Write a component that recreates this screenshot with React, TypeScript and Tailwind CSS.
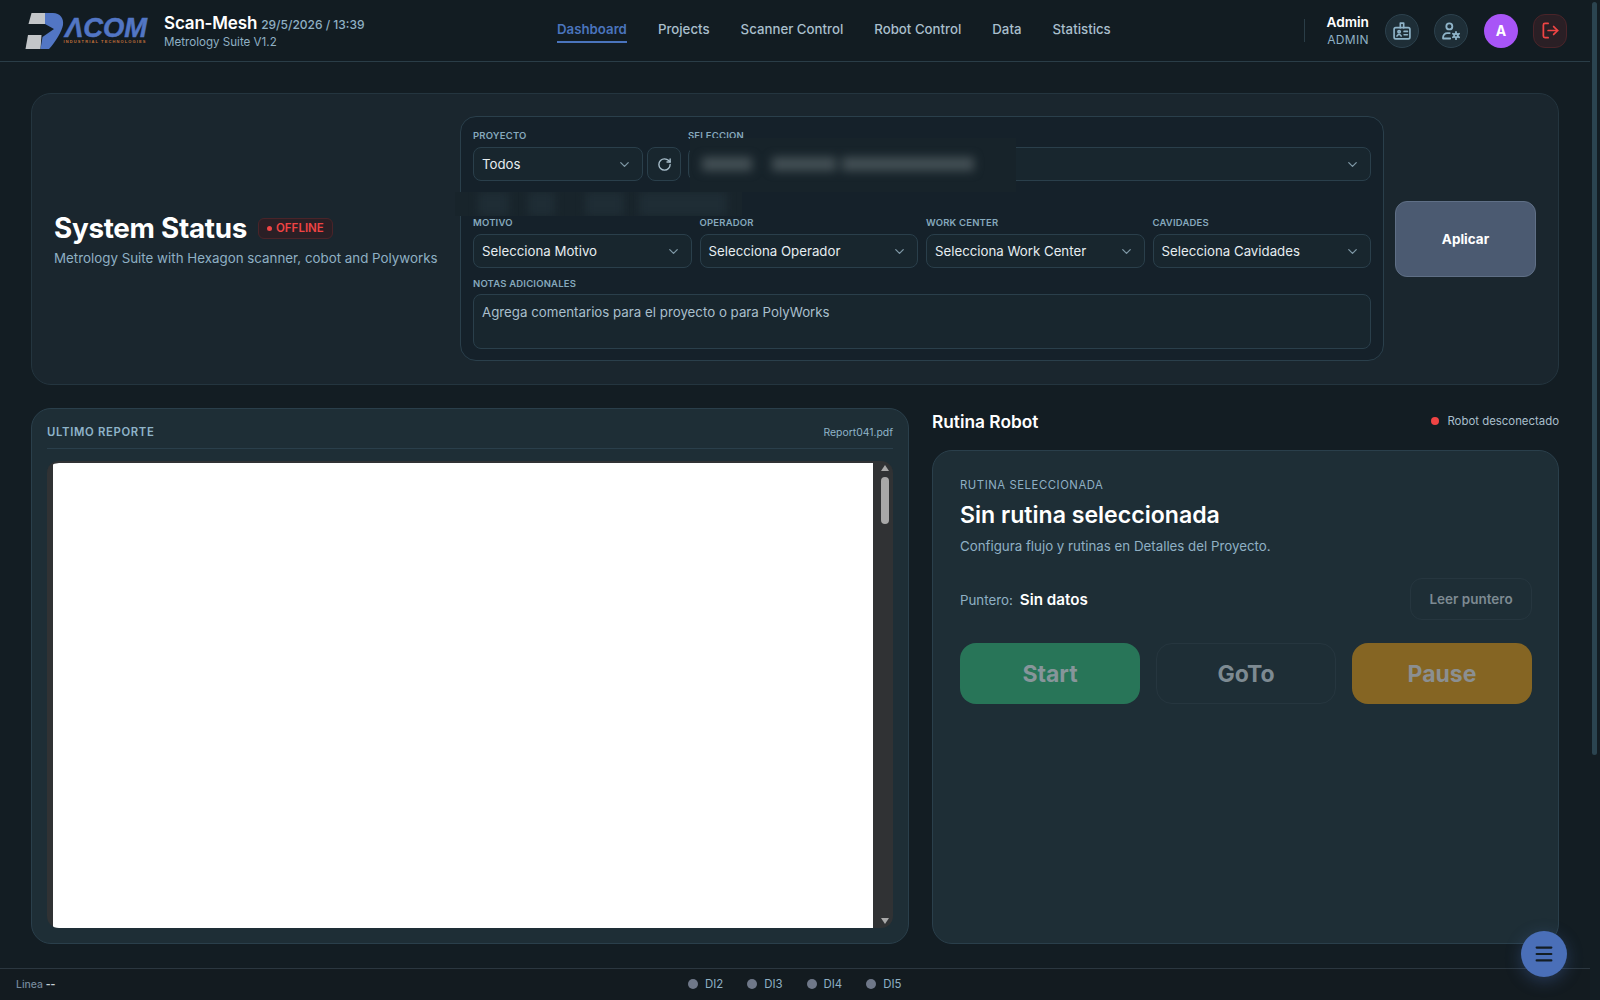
import React from 'react';
import { ChevronDown, LogOut, Menu, RotateCw } from 'lucide-react';

const navItems = ['Dashboard', 'Projects', 'Scanner Control', 'Robot Control', 'Data', 'Statistics'];
const inputs = ['DI2', 'DI3', 'DI4', 'DI5'];
const fields = [
  { label: 'Motivo', value: 'Selecciona Motivo' },
  { label: 'Operador', value: 'Selecciona Operador' },
  { label: 'Work Center', value: 'Selecciona Work Center' },
  { label: 'Cavidades', value: 'Selecciona Cavidades' },
];

const labelStyle = 'block h-[13px] text-[9.5px] leading-[14px] font-semibold uppercase tracking-[0.02em] text-[#86a9bd]';
const selectStyle =
  'flex items-center justify-between h-[34px] mt-[5px] pt-[1px] pl-2 pr-[10px] rounded-lg border border-[#2a3f4b] bg-[#18262e] text-[13.25px] text-[#e6edf1]';

const Logo = () => (
  <svg width="126" height="38" viewBox="0 0 126 38" className="shrink-0">
    <path d="M6.5 1H21L20 12H3.5Z" fill="#c3c6c9" />
    <path d="M3 23H16.5L15.5 37H0.5Z" fill="#c3c6c9" />
    <path d="M20 1H28C35 1 39 6 38 13C37 19 30 31 24 37H15.5L17.5 25L29 17L20 12Z" fill="#5276c4" />
    <text
      x="40"
      y="24.5"
      fill="#5276c4"
      stroke="#5276c4"
      strokeWidth="0.5"
      fontFamily="Liberation Sans, sans-serif"
      fontStyle="italic"
      fontWeight="700"
      fontSize="27"
      textLength="82"
      lengthAdjust="spacingAndGlyphs"
    >
      ΛCOM
    </text>
    <text
      x="38.5"
      y="31"
      fill="#c0703a"
      fontFamily="Liberation Sans, sans-serif"
      fontWeight="700"
      fontSize="4"
      textLength="82"
      lengthAdjust="spacing"
    >
      INDUSTRIAL TECHNOLOGIES
    </text>
  </svg>
);

const BadgeIcon = () => (
  <svg width="20" height="20" viewBox="0 0 24 24" fill="none" stroke="#8fb4c9" strokeWidth="2" strokeLinecap="round" strokeLinejoin="round">
    <rect x="2.5" y="8" width="19" height="13.5" rx="2" />
    <path d="M10 8V2.5h4V8" />
    <circle cx="8.5" cy="13" r="1.4" />
    <path d="M6 18c.6-1.3 1.4-1.8 2.5-1.8s1.9.5 2.5 1.8" />
    <path d="M14.5 12.5h4M14.5 16.5h4" />
  </svg>
);

const UserGearIcon = () => (
  <svg width="20" height="20" viewBox="0 0 24 24" fill="none" stroke="#8fb4c9" strokeWidth="2.2" strokeLinecap="round" strokeLinejoin="round">
    <circle cx="10" cy="6.5" r="3.6" />
    <path d="M2.5 21v-1.5a5 5 0 0 1 5-5h3M2.5 21h8.5" />
    <circle cx="18" cy="17.5" r="2.2" />
    <path d="M18 13.2v1.1M18 20.7v1.1M14.3 15.4l1 .6M20.7 19l1 .6M14.3 19.6l1-.6M20.7 16l1-.6" />
  </svg>
);

const Header = () => (
  <header className="flex items-center h-[62px] shrink-0 pl-[25px] pr-[23px] border-b border-[#2a3d47] bg-[#121c22]">
    <div className="flex items-center w-[532px]">
      <Logo />
      <div className="ml-[13px]">
        <div className="flex items-baseline gap-1 mt-[1px] leading-5">
          <span className="text-[17px] font-semibold tracking-[-0.01em] text-white">Scan-Mesh</span>
          <span className="text-xs font-medium text-[#8fb0c4]">29/5/2026 / 13:39</span>
        </div>
        <div className="mt-[1px] text-[11.6px] leading-4 text-[#8fb0c4]">Metrology Suite V1.2</div>
      </div>
    </div>
    <nav className="flex items-center gap-[31px] text-[13.25px] font-medium text-[#a9bfcc]">
      {navItems.map((item, i) => (
        <a
          key={item}
          className={
            i === 0
              ? 'pb-[2px] border-b-2 border-[#4a74bd] font-semibold text-[#4a74bd] leading-5'
              : 'pb-[2px] border-b-2 border-transparent leading-5'
          }
        >
          {item}
        </a>
      ))}
    </nav>
    <div className="flex items-center ml-auto">
      <div className="w-px h-[23px] mr-[21px] bg-[#2a3d47]" />
      <div className="text-right mr-4">
        <div className="text-[13.7px] leading-[18px] font-semibold text-white">Admin</div>
        <div className="text-xs leading-[17px] tracking-[0.03em] text-[#8fb0c4]">ADMIN</div>
      </div>
      <div className="flex items-center justify-center w-[34px] h-[34px] rounded-full border border-[#2c414d] bg-[#1e2e37]">
        <BadgeIcon />
      </div>
      <div className="flex items-center justify-center w-[34px] h-[34px] ml-[15px] rounded-full border border-[#2c414d] bg-[#1e2e37]">
        <UserGearIcon />
      </div>
      <div className="flex items-center justify-center w-[34px] h-[34px] ml-4 rounded-full bg-[#a855f7] text-sm font-bold text-white">
        A
      </div>
      <div className="flex items-center justify-center w-[34px] h-[34px] ml-[15px] rounded-xl border border-[#4a2429] bg-[#2a1f25]">
        <LogOut size={19} strokeWidth={2.2} className="text-[#ef4444]" />
      </div>
    </div>
  </header>
);

const ProjectPanel = () => (
  <div className="relative w-[924px] h-[245px] -mt-[1px] p-3 rounded-2xl border border-[#2a3f4b] bg-[#15212a]">
    <div className="flex gap-[7px] h-[52px]">
      <div className="w-[170px]">
        <label className={labelStyle}>Proyecto</label>
        <div className={selectStyle}>
          Todos
          <ChevronDown size={15} className="text-[#7f98a6]" />
        </div>
      </div>
      <div className="flex items-center justify-center w-[34px] h-[34px] mt-[18px] -ml-[3px] rounded-lg border border-[#2a3f4b] bg-[#18262e]">
        <RotateCw size={15} strokeWidth={2.2} className="text-[#a9bfcc]" />
      </div>
      <div className="flex-1">
        <label className={labelStyle}>Seleccion</label>
        <div className={selectStyle + ' justify-end'}>
          <ChevronDown size={15} className="text-[#7f98a6]" />
        </div>
      </div>
    </div>
    <div className="grid grid-cols-4 gap-2 mt-[35px]">
      {fields.map((field) => (
        <div key={field.label}>
          <label className={labelStyle}>{field.label}</label>
          <div className={selectStyle}>
            {field.value}
            <ChevronDown size={15} className="text-[#7f98a6]" />
          </div>
        </div>
      ))}
    </div>
    <label className={labelStyle + ' mt-[9px]'}>Notas adicionales</label>
    <textarea
      readOnly
      placeholder="Agrega comentarios para el proyecto o para PolyWorks"
      className="block w-full h-[55px] mt-[4px] px-2 py-[8px] rounded-lg border border-[#2a3f4b] bg-[#18262e] text-[13.3px] text-[#a9bfcc] placeholder:text-[#a9bfcc] outline-none resize-none"
    />
    {/* difuminado de la seleccion */}
    <div className="absolute left-[229px] top-[21px] flex items-center w-[326px] h-[54px] pl-[12px] bg-[#17232a]">
      <div className="flex gap-[20px] -mt-[2px] blur-[5px]">
        <div className="w-[50px] h-[14px] bg-[#434f54]" />
        <div className="flex gap-[6px]">
          <div className="w-[64px] h-[14px] bg-[#434f54]" />
          <div className="w-[132px] h-[14px] bg-[#434f54]" />
        </div>
      </div>
    </div>
    <div className="absolute -left-[6px] top-[75px] flex w-[287px] h-[24px] overflow-hidden bg-[#18242b]">
      <div className="ml-[23px] w-[31px] h-full bg-[#1f2d35] blur-[4px]" />
      <div className="ml-[19px] w-[27px] h-full bg-[#1f2d35] blur-[4px]" />
      <div className="ml-[30px] w-[39px] h-full bg-[#1f2d35] blur-[4px]" />
      <div className="ml-[15px] w-[88px] h-full bg-[#1f2d35] blur-[4px]" />
    </div>
  </div>
);

const StatusCard = () => (
  <section className="flex items-center h-[292px] pl-[22px] pr-[22px] rounded-[20px] border border-[#24353f] bg-[#1a262e]">
    <div className="w-[406px]">
      <div className="flex items-center gap-[11px]">
        <h1 className="mt-[1px] text-[27.8px] leading-9 font-bold tracking-[-0.01em] text-white">System Status</h1>
        <span className="flex items-center gap-1 h-[21px] px-2 mt-[1px] rounded-md border border-[#4a2429] bg-[#2a1f25] text-[11.5px] font-semibold text-[#ef4444]">
          <span className="w-[5px] h-[5px] rounded-full bg-[#ef4444]" />
          OFFLINE
        </span>
      </div>
      <p className="mt-[2px] text-[13.35px] text-[#8fb0c4]">Metrology Suite with Hexagon scanner, cobot and Polyworks</p>
    </div>
    <ProjectPanel />
    <button className="w-[141px] h-[76px] ml-auto -mt-[1px] pt-[1px] rounded-xl border border-[#5f6f86] bg-[#4b5a71] text-[13.5px] font-bold text-white">
      Aplicar
    </button>
  </section>
);

const ReportCard = () => (
  <section className="flex flex-col w-[878px] px-[15px] pt-[13px] pb-[15px] rounded-[20px] border border-[#2a3f4b] bg-[#1e2e36]">
    <div className="flex items-center justify-between h-[21px] pb-[5px] box-content text-[#8fb4c9] border-b border-[#2a3f4b]">
      <h2 className="text-[11.3px] font-semibold tracking-[0.06em]">ULTIMO REPORTE</h2>
      <span className="text-[10.4px]">Report041.pdf</span>
    </div>
    <div className="flex flex-1 mt-[12px] overflow-hidden rounded-xl border-t-2 border-[#303234] bg-[#303234]">
      <div className="flex-1 ml-[6px] bg-white" />
      <div className="flex flex-col items-center w-[20px] pl-[4px] pt-[2px] pb-[4px]">
        <div className="w-0 h-0 border-x-[4px] border-x-transparent border-b-[6px] border-b-[#a8a8a8]" />
        <div className="w-[8px] h-[47px] mt-[6px] rounded-full bg-[#a8a8a8]" />
        <div className="w-0 h-0 mt-auto border-x-[4px] border-x-transparent border-t-[6px] border-t-[#a8a8a8]" />
      </div>
    </div>
  </section>
);

const RobotColumn = () => (
  <section className="flex flex-col flex-1 min-w-0">
    <div className="flex items-center justify-between h-[26px] pt-[1px]">
      <h2 className="text-[17.3px] font-semibold text-white">Rutina Robot</h2>
      <div className="flex items-center gap-2 text-[11.4px] text-[#a9bfcc]">
        <span className="w-[8px] h-[8px] rounded-full bg-[#ef4444]" />
        Robot desconectado
      </div>
    </div>
    <div className="flex-1 mt-[16px] pl-[27px] pr-[26px] pt-[26px] rounded-[20px] border border-[#2a3f4b] bg-[#1e2e36]">
      <div className="text-[11.3px] leading-4 tracking-[0.05em] text-[#8fb0c4]">RUTINA SELECCIONADA</div>
      <h3 className="mt-[6px] text-[23.1px] leading-8 font-semibold text-white">Sin rutina seleccionada</h3>
      <p className="mt-[5px] text-[13.3px] leading-5 text-[#8fb0c4]">Configura flujo y rutinas en Detalles del Proyecto.</p>
      <div className="flex items-center justify-between mt-[22px]">
        <div className="flex items-baseline gap-[7px] pt-[2px]">
          <span className="text-[13.3px] text-[#8fb0c4]">Puntero:</span>
          <span className="text-[15.2px] font-semibold text-white">Sin datos</span>
        </div>
        <button className="w-[122px] h-[42px] rounded-xl border border-[#26363f] text-[13.5px] font-semibold text-[#7d8a92]">
          Leer puntero
        </button>
      </div>
      <div className="grid grid-cols-3 gap-4 mt-[23px]">
        <button className="h-[61px] pt-[1px] rounded-2xl bg-[#287558] text-[23px] font-bold text-[#87959a]">Start</button>
        <button className="h-[61px] pt-[1px] rounded-2xl border border-[#26363f] text-[23px] font-bold text-[#7d8a92]">GoTo</button>
        <button className="h-[61px] pt-[1px] rounded-2xl bg-[#856523] text-[23px] font-bold text-[#8b8f91]">Pause</button>
      </div>
    </div>
  </section>
);

const Footer = () => (
  <footer className="flex items-center h-[32px] shrink-0 px-4 border-t border-[#2b3740] bg-[#131b20]">
    <div className="w-[672px] text-[10.4px] font-medium text-[#75889a]">
      Linea <span className="font-bold text-[#c5d0d6]">--</span>
    </div>
    <div className="flex gap-[24px]">
      {inputs.map((item) => (
        <div key={item} className="flex items-center gap-[7px] text-[11.4px] text-[#8fb0c4]">
          <span className="w-[10px] h-[10px] rounded-full bg-[#6f7889]" />
          {item}
        </div>
      ))}
    </div>
  </footer>
);

const App = () => (
  <div className="relative flex w-full h-screen overflow-hidden bg-[#131d23] font-['Inter',sans-serif]">
    <div className="flex flex-col w-[1590px] shrink-0">
      <Header />
      <main className="flex flex-col flex-1 min-h-0 gap-[23px] px-[31px] pt-[31px] pb-[24px]">
        <StatusCard />
        <div className="flex flex-1 min-h-0 gap-[23px]">
          <ReportCard />
          <RobotColumn />
        </div>
      </main>
      <Footer />
    </div>
    <div className="flex-1 pt-[2px] pl-[2px]">
      <div className="w-[5px] h-[753px] rounded-full bg-[#2b4450]" />
    </div>
    <button className="absolute right-[33px] bottom-[23px] flex items-center justify-center w-[46px] h-[46px] rounded-full bg-[#4a6fb8] shadow-[0_4px_16px_rgba(74,111,184,0.35)]">
      <Menu size={22} strokeWidth={2.4} className="text-[#131d23]" />
    </button>
  </div>
);

export default App;
